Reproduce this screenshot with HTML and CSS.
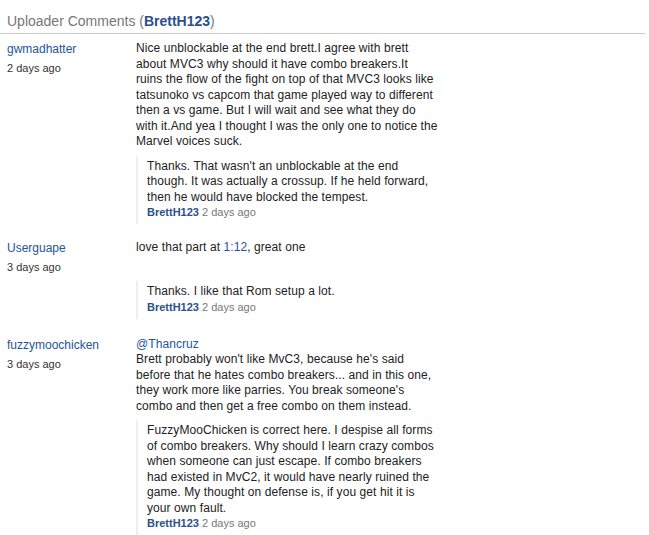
FILE: index.html
```html
<!DOCTYPE html>
<html lang="en">
<head>
    <meta charset="UTF-8">
    <title>Uploader Comments</title>
    <link rel="stylesheet" href="styles.css">
</head>
<body>
    <div class="comments">
        <h3 class="comments-title">Uploader Comments (<a href="#">BrettH123</a>)</h3>

        <div class="comment">
            <div class="comment-meta">
                <a href="#" class="author">gwmadhatter</a>
                <div class="age">2 days ago</div>
            </div>
            <div class="comment-body">
                <p>Nice unblockable at the end brett.I agree with brett about MVC3 why should it have combo breakers.It<br>ruins the flow of the fight on top of that MVC3 looks like tatsunoko vs capcom that game played way to different then a vs game. But I will wait and see what they do with it.And yea I thought I was the only one to notice the Marvel voices suck.</p>
            </div>
            <div class="reply">
                <p>Thanks. That wasn't an unblockable at the end though. It was actually a crossup. If he held forward, then he would have blocked the tempest.</p>
                <div class="reply-meta"><a href="#">BrettH123</a> 2 days ago</div>
            </div>
        </div>

        <div class="comment">
            <div class="comment-meta">
                <a href="#" class="author">Userguape</a>
                <div class="age">3 days ago</div>
            </div>
            <div class="comment-body">
                <p>love that part at <a href="#">1:12</a>, great one</p>
            </div>
            <div class="reply">
                <p>Thanks. I like that Rom setup a lot.</p>
                <div class="reply-meta"><a href="#">BrettH123</a> 2 days ago</div>
            </div>
        </div>

        <div class="comment">
            <div class="comment-meta">
                <a href="#" class="author">fuzzymoochicken</a>
                <div class="age">3 days ago</div>
            </div>
            <div class="comment-body">
                <p><a href="#">@Thancruz</a><br>Brett probably won't like MvC3, because he's said before that he hates combo breakers... and in this one, they work more like parries. You break someone's combo and then get a free combo on them instead.</p>
            </div>
            <div class="reply">
                <p>FuzzyMooChicken is correct here. I despise all forms of combo breakers. Why should I learn crazy combos when someone can just escape. If combo breakers had existed in MvC2, it would have nearly ruined the game. My thought on defense is, if you get hit it is your own fault.</p>
                <div class="reply-meta"><a href="#">BrettH123</a> 2 days ago</div>
            </div>
        </div>
    </div>
</body>
</html>
```

FILE: styles.css
```css
body, html {
    margin: 0;
    padding: 0;
    background: #fff;
    font-family: 'Liberation Sans', Arial, sans-serif;
    color: #222;
}

a {
    color: #24549c;
    text-decoration: none;
}

.comments {
    width: 645px;
}

.comments-title {
    margin: 0;
    padding: 13px 0 4px 7px;
    font-size: 14px;
    font-weight: normal;
    line-height: 16px;
    color: #777;
    border-bottom: 1px solid #ccc;
}

.comments-title a {
    color: #2a4f8c;
    font-weight: bold;
}

.comment {
    display: grid;
    grid-template-columns: 129px 302px;
    padding: 0 0 0 7px;
    margin-top: 7px;
    margin-bottom: 16px;
}

.comment:last-child {
    margin-top: 18px;
}

.comment-meta {
    font-size: 12px;
    line-height: 16px;
}

.comment-meta .age {
    font-size: 11px;
    color: #333;
    margin-top: 3px;
}

.comment-body p {
    margin: 0;
    font-size: 12px;
    line-height: 15.5px;
    letter-spacing: 0.08px;
}

.reply {
    grid-column: 2;
    margin-top: 6px;
    padding: 3px 0 5px 9px;
    border-left: 2px solid #eee;
}

.reply p {
    width: 289px;
    margin: 0;
    font-size: 12px;
    line-height: 15.5px;
    letter-spacing: 0.08px;
}

.reply-meta {
    font-size: 11px;
    line-height: 14px;
    color: #777;
}

.reply-meta a {
    color: #2a4f8c;
    font-weight: bold;
}
```
